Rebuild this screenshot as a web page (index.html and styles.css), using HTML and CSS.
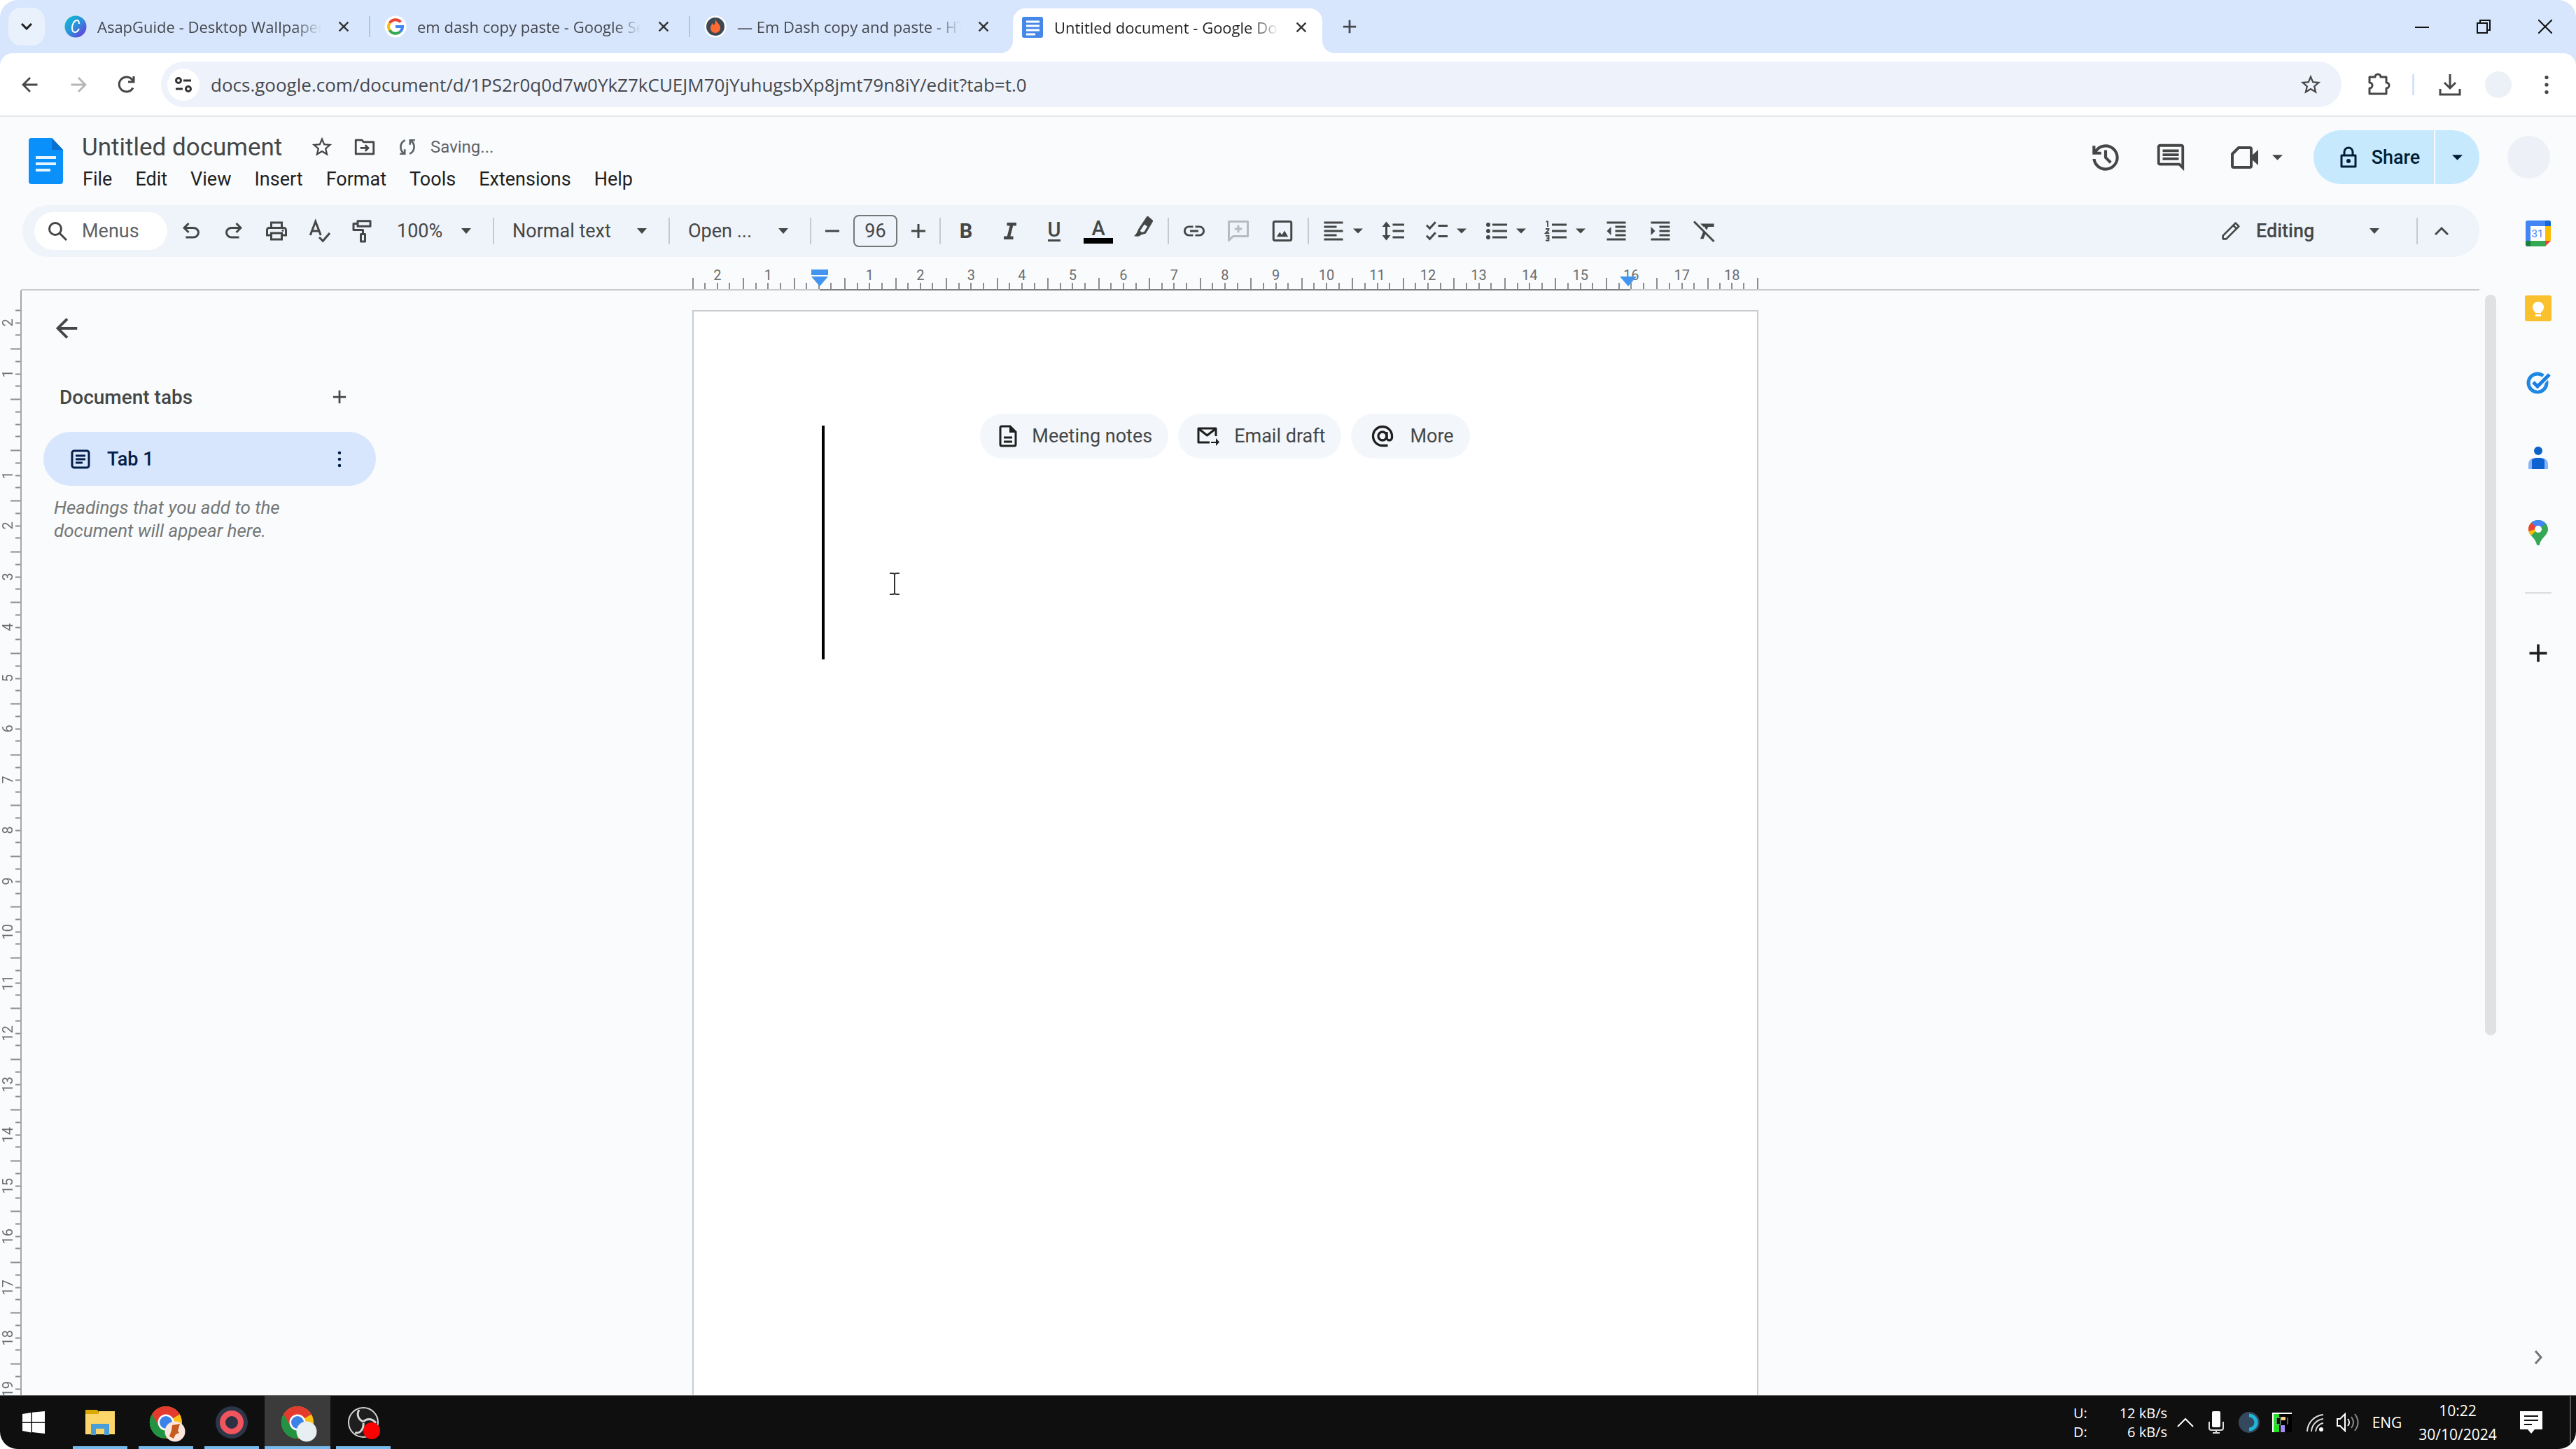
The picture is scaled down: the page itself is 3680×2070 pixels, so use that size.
FILE: index.html
```html
<!DOCTYPE html>
<html lang="en">
<head>
    <meta charset="UTF-8">
    <title>Untitled document - Google Docs</title>
    <meta name="viewport" content="width=device-width, initial-scale=1.0">
    <link rel="stylesheet" href="styles.css">
</head>
<body>
<svg class="sprite" width="0" height="0" aria-hidden="true">
    <symbol id="close" viewBox="0 0 20 20"><path d="M2 2l16 16M18 2L2 18" fill="none" stroke="currentColor" stroke-width="3"/></symbol>
    <symbol id="plus" viewBox="0 0 24 24"><path d="M12 2v20M2 12h20" fill="none" stroke="currentColor" stroke-width="3"/></symbol>
    <symbol id="arrow" viewBox="0 0 16 8"><path d="M0 0h16l-8 8z" fill="currentColor"/></symbol>
    <symbol id="dots" viewBox="0 0 8 32"><g fill="currentColor"><circle cx="4" cy="4" r="3"/><circle cx="4" cy="16" r="3"/><circle cx="4" cy="28" r="3"/></g></symbol>
    <symbol id="star" viewBox="0 0 24 24"><path fill="currentColor" d="M22 9.24l-7.19-.62L12 2 9.19 8.63 2 9.24l5.46 4.73L5.82 21 12 17.27 18.18 21l-1.63-7.03L22 9.24zM12 15.4l-3.76 2.27 1-4.28-3.32-2.88 4.38-.38L12 6.1l1.71 4.04 4.38.38-3.32 2.88 1 4.28L12 15.4z"/></symbol>
    <symbol id="back" viewBox="0 0 24 24"><path d="M21 12H4M12 3.5L3.500 12l8.500 8.500" fill="none" stroke="currentColor" stroke-width="2.400"/></symbol>
    <symbol id="chrome" viewBox="0 0 48 48">
        <circle cx="24" cy="24" r="23" fill="#fbc116"/>
        <path d="M24 24L4.080 12.500A23 23 0 0 1 43.900 12.500z" fill="#e33b2e"/>
        <path d="M4.080 12.500A23 23 0 0 0 24 47l10-17.300L24 24z" fill="#229342"/>
        <path d="M4.080 12.500L14 29.700 24 24V13z" fill="#e33b2e"/>
        <path d="M4.080 12.500L14 29.700l10 5.300 0 12A23 23 0 0 1 4.080 12.500z" fill="#229342"/>
        <circle cx="24" cy="24" r="11.500" fill="#fff"/>
        <circle cx="24" cy="24" r="9" fill="#3b82e8"/>
    </symbol>
</svg>

<div class="screen">
    <div class="browser">
        <div class="tabstrip">
            <button class="tab-search" aria-label="Search tabs"><svg width="16" height="10" viewBox="0 0 16 10"><path d="M1 1l7 7 7-7" fill="none" stroke="#1f1f1f" stroke-width="3"/></svg></button>
            <div class="tab">
                <svg class="favicon" viewBox="0 0 32 32"><defs><linearGradient id="canva" x1="0" y1="0" x2="1" y2="1"><stop offset="0" stop-color="#09c3cf"/><stop offset="0.500" stop-color="#2d8fdc"/><stop offset="1" stop-color="#7428e0"/></linearGradient></defs><circle cx="16" cy="16" r="15.500" fill="url(#canva)"/><path d="M21 12c0-3-1-5-3-5-4 0-7 6-7 11 0 4 2 6 4 6 3 0 5-3 6-5" fill="none" stroke="#fff" stroke-width="2"/></svg>
                <span class="tab-title">AsapGuide - Desktop Wallpaper</span>
                <button aria-label="Close tab"><svg width="16" height="16"><use href="#close"/></svg></button>
            </div>
            <div class="tab">
                <svg class="favicon" viewBox="0 0 32 32"><circle cx="16" cy="16" r="15.500" fill="#fff"/><g fill="none" stroke-width="4"><path d="M23.500 9.500A10 10 0 0 0 7.500 11" stroke="#ea4335"/><path d="M7.500 11a10 10 0 0 0 0 10" stroke="#fbbc05"/><path d="M7.500 21a10 10 0 0 0 15 2.500" stroke="#34a853"/><path d="M22.500 23.500A10 10 0 0 0 26 16H16" stroke="#4285f4"/></g></svg>
                <span class="tab-title">em dash copy paste - Google Search</span>
                <button aria-label="Close tab"><svg width="16" height="16"><use href="#close"/></svg></button>
            </div>
            <div class="tab">
                <svg class="favicon" viewBox="0 0 32 32"><circle cx="16" cy="16" r="15.500" fill="#fff"/><circle cx="16" cy="16" r="13" fill="#3d4852"/><path d="M16 5c1 5 7 7 7 13 0 4-3 7-7 7s-7-3-7-7c0-3 2-4 2-7l3 3c2-3 2-6 2-9z" fill="#ff6b35"/></svg>
                <span class="tab-title">— Em Dash copy and paste - HTML</span>
                <button aria-label="Close tab"><svg width="16" height="16"><use href="#close"/></svg></button>
            </div>
            <div class="tab active">
                <svg class="favicon" viewBox="0 0 32 32"><rect x="1" y="1" width="30" height="30" rx="3" fill="#4688e8"/><path d="M7 8h19M7 14h19M7 20h19M7 26h13" stroke="#fff" stroke-width="3"/></svg>
                <span class="tab-title">Untitled document - Google Docs</span>
                <button aria-label="Close tab"><svg width="16" height="16"><use href="#close"/></svg></button>
            </div>
            <button class="new-tab" aria-label="New tab"><svg width="22" height="22"><use href="#plus"/></svg></button>
            <div class="window-controls">
                <button aria-label="Minimise"><svg width="20" height="20" viewBox="0 0 20 20"><path d="M0 11h20" stroke="#111" stroke-width="2"/></svg></button>
                <button aria-label="Restore"><svg width="20" height="20" viewBox="0 0 20 20"><g fill="none" stroke="#111" stroke-width="2"><path d="M1 5h14v14H1z"/><path d="M5 5V1h14v14h-4"/></g></svg></button>
                <button aria-label="Close"><svg width="20" height="20" viewBox="0 0 20 20"><path d="M0 0l20 20M20 0L0 20" stroke="#111" stroke-width="2"/></svg></button>
            </div>
        </div>

        <div class="navbar">
            <button class="nav-button" aria-label="Back"><svg width="28" height="28"><use href="#back"/></svg></button>
            <button class="nav-button muted flip" aria-label="Forward"><svg width="28" height="28"><use href="#back"/></svg></button>
            <button class="nav-button" aria-label="Reload"><svg width="28" height="28" viewBox="0 0 28 28"><path d="M23 18.500A10.500 10.500 0 1 1 22 7l2 3M24 2v8h-8" fill="none" stroke="currentColor" stroke-width="3"/></svg></button>
            <div class="address">
                <button class="site-info" aria-label="View site information"><svg width="26" height="24" viewBox="0 0 26 24"><g fill="none" stroke="#333" stroke-width="3"><circle cx="6" cy="6" r="3.500"/><path d="M13 6h11M2 18h10"/><circle cx="20" cy="18" r="3.500"/></g></svg></button>
                <input class="url" type="text" aria-label="Address" value="docs.google.com/document/d/1PS2r0q0d7w0YkZ7kCUEJM70jYuhugsbXp8jmt79n8iY/edit?tab=t.0">
                <button class="nav-button" aria-label="Bookmark"><svg width="34" height="34"><use href="#star"/></svg></button>
            </div>
            <button class="extensions" aria-label="Extensions"><svg width="34" height="34" viewBox="0 0 34 34"><path d="M3 6h8a4 4 0 0 1 8 0h8v8a4 4 0 0 1 0 8v8H3v-8a4 4 0 0 0 0-8z" fill="none" stroke="currentColor" stroke-width="3" stroke-linejoin="round"/></svg></button>
            <span class="nav-divider"></span>
            <button class="nav-button" aria-label="Downloads"><svg width="32" height="32" viewBox="0 0 32 32"><path d="M16 1v19M8 13l8 8 8-8M2 22v8h28v-8" fill="none" stroke="currentColor" stroke-width="3"/></svg></button>
            <button class="nav-button" aria-label="Profile"><span class="avatar-small"></span></button>
            <button class="nav-button" aria-label="Menu"><svg width="8" height="28"><use href="#dots"/></svg></button>
        </div>
    </div>

    <div class="docs">
        <header class="docs-header">
            <a class="logo" href="#" aria-label="Docs home"><svg width="49" height="66" viewBox="0 0 49 66"><path d="M4 0h29l16 17v45a4 4 0 0 1-4 4H4a4 4 0 0 1-4-4V4a4 4 0 0 1 4-4z" fill="#0a90fb"/><path d="M33 0l16 17H33z" fill="#0a6fd0"/><path d="M10 28h29M10 37h29M10 46h21" stroke="#e5f4ff" stroke-width="4"/></svg></a>
            <div class="title-block">
                <div class="title-row">
                    <input class="doc-title" type="text" aria-label="Document title" value="Untitled document">
                    <button aria-label="Star"><svg width="34" height="34"><use href="#star"/></svg></button>
                    <button aria-label="Move"><svg width="34" height="34" viewBox="0 0 24 24"><g fill="none" stroke="currentColor" stroke-width="2"><path d="M3 5h6l2 2h10v12H3z" stroke-linejoin="round"/><path d="M7.500 13h8M12.500 10l3 3-3 3"/></g></svg></button>
                    <div class="status"><svg width="26" height="28" viewBox="0 0 24 24"><g fill="none" stroke="currentColor" stroke-width="2.500"><path d="M9 3A10 10 0 0 0 7 20M8.500 15v6H2M15 21A10 10 0 0 0 17 4M15.500 9V3H22"/></g></svg><span>Saving...</span></div>
                </div>
                <nav class="menus">
                    <button>File</button><button>Edit</button><button>View</button><button>Insert</button><button>Format</button><button>Tools</button><button>Extensions</button><button>Help</button>
                </nav>
            </div>
            <div class="header-actions">
                <button class="header-icon" aria-label="Version history"><svg width="50" height="50" viewBox="0 0 24 24"><path fill="currentColor" d="M12 21q-3.450 0-6.012-2.287T3.050 13H5.100q.350 2.600 2.313 4.300T12 19q2.925 0 4.963-2.037T19 12t-2.037-4.963T12 5q-1.725 0-3.225.800T6.250 8H9v2H3V4h2v2.350q1.275-1.600 3.113-2.475T12 3q1.875 0 3.513.713t2.850 1.924 1.925 2.850T21 12t-.712 3.513-1.925 2.850-2.850 1.925T12 21m2.800-4.800L11 12.400V7h2v4.600l3.200 3.200z"/></svg></button>
                <button class="header-icon" aria-label="Comments"><svg width="46" height="46" viewBox="0 0 24 24"><path fill="currentColor" d="M21.990 4c0-1.100-.890-2-1.990-2H4c-1.100 0-2 .900-2 2v12c0 1.100.900 2 2 2h14l4 4-.010-18zM20 4v13.170L18.830 16H4V4h16zM6 12h12v2H6zm0-3h12v2H6zm0-3h12v2H6z"/></svg></button>
                <button class="header-icon meet" aria-label="Meet"><svg width="40" height="32" viewBox="0 0 40 32"><path d="M11 2h16a2 2 0 0 1 2 2v24a2 2 0 0 1-2 2H4a2 2 0 0 1-2-2V11z" fill="none" stroke="currentColor" stroke-width="4" stroke-linejoin="round"/><path d="M29 14l10-9v22l-10-9z" fill="currentColor"/></svg><svg width="15" height="8"><use href="#arrow"/></svg></button>
                <div class="share">
                    <button class="share-main"><svg width="26" height="32" viewBox="0 0 26 32"><path d="M3 13h20v16H3zM7 13V8a6 6 0 0 1 12 0v5" fill="none" stroke="currentColor" stroke-width="3" stroke-linejoin="round"/><circle cx="13" cy="21" r="3" fill="currentColor"/></svg>Share</button>
                    <button class="share-more" aria-label="Quick sharing actions"><svg width="15" height="8"><use href="#arrow"/></svg></button>
                </div>
                <button class="avatar" aria-label="Account"></button>
            </div>
        </header>

        <div class="workspace">
            <main class="editor">
                <div class="toolbar">
                    <label class="menu-search"><svg width="28" height="28" viewBox="0 0 28 28"><g fill="none" stroke="#444746" stroke-width="3"><circle cx="11" cy="11" r="8.500"/><path d="M17 17l10 10"/></g></svg><input type="text" placeholder="Menus" aria-label="Search the menus"></label>
                    <button class="tool" aria-label="Undo"><svg viewBox="0 0 24 24"><path fill="currentColor" d="M7 19v-2h7.100q1.575 0 2.738-1T18 13.500 16.838 11 14.100 10H7.800l2.600 2.600L9 14 4 9l5-5 1.400 1.400L7.800 8h6.300q2.425 0 4.163 1.575T20 13.500t-1.737 3.925T14.100 19z"/></svg></button>
                    <button class="tool flip" aria-label="Redo"><svg viewBox="0 0 24 24"><path fill="currentColor" d="M7 19v-2h7.100q1.575 0 2.738-1T18 13.500 16.838 11 14.100 10H7.800l2.600 2.600L9 14 4 9l5-5 1.400 1.400L7.800 8h6.300q2.425 0 4.163 1.575T20 13.500t-1.737 3.925T14.100 19z"/></svg></button>
                    <button class="tool" aria-label="Print"><svg viewBox="0 0 24 24"><path fill="currentColor" d="M19 8h-1V3H6v5H5c-1.660 0-3 1.340-3 3v6h4v4h12v-4h4v-6c0-1.660-1.340-3-3-3zM8 5h8v3H8V5zm8 12v2H8v-4h8v2zm2-2v-2H6v2H4v-4c0-.550.450-1 1-1h14c.550 0 1 .450 1 1v4h-2z"/><circle cx="18" cy="11.500" r="1" fill="currentColor"/></svg></button>
                    <button class="tool" aria-label="Spelling and grammar check"><svg viewBox="0 0 24 24"><path d="M3.500 16L8.500 3l5 13M5.300 12h6.500M12 18l3.500 3.500L22 14" fill="none" stroke="currentColor" stroke-width="2"/></svg></button>
                    <button class="tool" aria-label="Paint format"><svg viewBox="0 0 24 24"><path d="M8 2.500h12v5H8zM8 5H4v6h9v4M11 15h4v7h-4z" fill="none" stroke="currentColor" stroke-width="2" stroke-linejoin="round"/></svg></button>
                    <span class="select zoom"><select aria-label="Zoom"><option>100%</option></select></span>
                    <span class="divider"></span>
                    <span class="select style"><select aria-label="Styles"><option>Normal text</option></select></span>
                    <span class="divider"></span>
                    <span class="select font"><select aria-label="Font"><option>Open ...</option></select></span>
                    <span class="divider"></span>
                    <button class="tool narrow" aria-label="Decrease font size"><svg class="small" viewBox="0 0 20 20"><path d="M0 10h20" stroke="currentColor" stroke-width="3"/></svg></button>
                    <input class="font-size" type="text" aria-label="Font size" value="96">
                    <button class="tool narrow" aria-label="Increase font size"><svg class="small" viewBox="0 0 20 20"><path d="M0 10h20M10 0v20" stroke="currentColor" stroke-width="3"/></svg></button>
                    <span class="divider"></span>
                    <div class="format-tools">
                        <button class="tool letter bold" aria-label="Bold">B</button>
                        <button class="tool" aria-label="Italic"><svg viewBox="0 0 24 24"><path d="M9 5.500h9M6 18.500h9M13.800 5l-3.600 14" fill="none" stroke="currentColor" stroke-width="3"/></svg></button>
                        <button class="tool letter" aria-label="Underline"><span class="underline">U</span></button>
                        <button class="tool letter" aria-label="Text colour"><span class="colour">A</span></button>
                        <button class="tool" aria-label="Highlight colour"><svg class="raised" viewBox="0 0 24 24"><path d="M17 3l4 3.500-6.500 11-3.500 1-4 1.500 2-5z" fill="none" stroke="currentColor" stroke-width="2.200" stroke-linejoin="round"/><path d="M17.500 3l3.500 3-3.800 6-5-3.500z" fill="currentColor"/><path d="M4 21l5-6 3 3-3 3z" fill="currentColor"/></svg></button>
                        <span class="divider"></span>
                        <button class="tool" aria-label="Insert link"><svg viewBox="0 0 24 24"><path fill="currentColor" d="M3.900 12c0-1.710 1.390-3.100 3.100-3.100h4V7H7c-2.760 0-5 2.240-5 5s2.240 5 5 5h4v-1.900H7c-1.710 0-3.100-1.390-3.100-3.100zM8 13h8v-2H8v2zm9-6h-4v1.900h4c1.710 0 3.100 1.390 3.100 3.100s-1.390 3.100-3.100 3.100h-4V17h4c2.760 0 5-2.240 5-5s-2.240-5-5-5z"/></svg></button>
                        <button class="tool disabled" aria-label="Add comment" disabled><svg viewBox="0 0 24 24"><path d="M3 21V3h18v14H7zM12 6.500v7M8.500 10h7" fill="none" stroke="currentColor" stroke-width="2" stroke-linejoin="round"/></svg></button>
                        <button class="tool" aria-label="Insert image"><svg viewBox="0 0 24 24"><rect x="3.500" y="3" width="17" height="18" rx="1.500" fill="none" stroke="currentColor" stroke-width="2"/><path d="M6.500 17.500l3-4.500 2 2.700 2.500-4 3.500 5.800z" fill="currentColor"/></svg></button>
                        <span class="divider"></span>
                        <button class="tool with-arrow" aria-label="Align"><svg viewBox="0 0 24 24"><path d="M3 4h18M3 8h12M3 12h18M3 16h12M3 20h18" stroke="currentColor" stroke-width="2"/></svg><svg class="caret-down"><use href="#arrow"/></svg></button>
                        <button class="tool" aria-label="Line and paragraph spacing"><svg viewBox="0 0 24 24"><path d="M11 6h11M11 12h11M11 18h11M5 6v12" stroke="currentColor" stroke-width="2"/><path d="M1 8l4-5 4 5zM1 16l4 5 4-5z" fill="currentColor"/></svg></button>
                        <button class="tool with-arrow" aria-label="Checklist"><svg viewBox="0 0 24 24"><path d="M13 7h9M13 17h9M2 6.500l3 3 5.500-6M2 16.500l3 3 5.500-6" fill="none" stroke="currentColor" stroke-width="2"/></svg><svg class="caret-down"><use href="#arrow"/></svg></button>
                        <button class="tool with-arrow" aria-label="Bulleted list"><svg viewBox="0 0 24 24"><path d="M8 6h14M8 12h14M8 18h14" stroke="currentColor" stroke-width="2"/><g fill="currentColor"><circle cx="4" cy="6" r="2"/><circle cx="4" cy="12" r="2"/><circle cx="4" cy="18" r="2"/></g></svg><svg class="caret-down"><use href="#arrow"/></svg></button>
                        <button class="tool with-arrow" aria-label="Numbered list"><svg viewBox="0 0 24 24"><path d="M8 6h14M8 12h14M8 18h14" stroke="currentColor" stroke-width="2"/><path d="M2.500 3h1.500v5M2 10h3v1l-3 3h3.500M2 16.500h3V21H2M3 18.700h2" fill="none" stroke="currentColor" stroke-width="1.200"/></svg><svg class="caret-down"><use href="#arrow"/></svg></button>
                        <button class="tool" aria-label="Decrease indent"><svg viewBox="0 0 24 24"><path d="M3 4h18M11 8h10M11 12h10M11 16h10M3 20h18" stroke="currentColor" stroke-width="2"/><path d="M7 8v8l-4-4z" fill="currentColor"/></svg></button>
                        <button class="tool" aria-label="Increase indent"><svg viewBox="0 0 24 24"><path d="M3 4h18M11 8h10M11 12h10M11 16h10M3 20h18" stroke="currentColor" stroke-width="2"/><path d="M3 8v8l4-4z" fill="currentColor"/></svg></button>
                        <button class="tool" aria-label="Clear formatting"><svg viewBox="0 0 24 24"><path d="M2 3l19 19" stroke="currentColor" stroke-width="2"/><path d="M8 5h13v3h-5.500l-1.300 3-2-2 .500-1H11zM11 12l2.200 2.200L11 19.500H8z" fill="currentColor"/></svg></button>
                    </div>
                    <span class="select mode"><svg width="32" height="32" viewBox="0 0 24 24"><path d="M3.500 20.500v-3.500L17 3.500l3.500 3.500L7 20.500zM14.500 6l3.500 3.500" fill="none" stroke="currentColor" stroke-width="2" stroke-linejoin="round"/></svg><select aria-label="Mode"><option>Editing</option></select></span>
                    <span class="divider"></span>
                    <button class="tool" aria-label="Hide the menus"><svg class="small" viewBox="0 0 20 20"><path d="M1 15l9-9 9 9" fill="none" stroke="currentColor" stroke-width="3"/></svg></button>
                </div>

                <div class="ruler-row">
                    <div class="ruler">
                        <span>2</span><span>1</span><span></span><span>1</span><span>2</span><span>3</span><span>4</span><span>5</span><span>6</span><span>7</span><span>8</span><span>9</span><span>10</span><span>11</span><span>12</span><span>13</span><span>14</span><span>15</span><span>16</span><span>17</span><span>18</span>
                        <i class="text-range"></i>
                        <svg class="indent-left" width="24" height="24" viewBox="0 0 24 24"><path d="M0 0h24v8H0zM0 10h24L12 24z" fill="#4294ee"/></svg>
                        <svg class="indent-right" width="24" height="14" viewBox="0 0 24 14"><path d="M0 0h24L12 14z" fill="#4294ee"/></svg>
                    </div>
                </div>

                <div class="canvas">
                    <div class="left-column">
                        <div class="ruler-vertical">
                            <div class="ruler-cells">
                                <span>2</span><span>1</span><span></span><span>1</span><span>2</span><span>3</span><span>4</span><span>5</span><span>6</span><span>7</span><span>8</span><span>9</span><span>10</span><span>11</span><span>12</span><span>13</span><span>14</span><span>15</span><span>16</span><span>17</span><span>18</span><span>19</span>
                            </div>
                        </div>
                        <aside class="outline">
                            <button class="outline-back" aria-label="Close tabs and outlines"><svg width="38" height="38"><use href="#back"/></svg></button>
                            <div class="outline-heading"><h2>Document tabs</h2><button aria-label="Add tab"><svg width="22" height="22"><use href="#plus"/></svg></button></div>
                            <div class="outline-tab">
                                <svg width="28" height="28" viewBox="0 0 28 28"><rect x="2" y="2" width="24" height="24" rx="3" fill="none" stroke="currentColor" stroke-width="3"/><path d="M7 9h14M7 14h14M7 19h10" stroke="currentColor" stroke-width="3"/></svg>
                                <a href="#">Tab 1</a>
                                <button aria-label="Tab options"><svg width="6" height="24"><use href="#dots"/></svg></button>
                            </div>
                            <p>Headings that you add to the document will appear here.</p>
                        </aside>
                    </div>
                    <div class="page">
                        <div class="chips">
                            <button><svg width="26" height="32" viewBox="0 0 26 32"><path d="M2 4a2 2 0 0 1 2-2h12l8 8v18a2 2 0 0 1-2 2H4a2 2 0 0 1-2-2z" fill="none" stroke="currentColor" stroke-width="3"/><path d="M15 2v9h9z" fill="currentColor"/><path d="M7 18h12M7 24h12" stroke="currentColor" stroke-width="3"/></svg>Meeting notes</button>
                            <button><svg width="32" height="28" viewBox="0 0 32 28"><path d="M27 14V3H2v20h16M3 4l11.500 9L26 4" fill="none" stroke="currentColor" stroke-width="3" stroke-linejoin="round"/><path d="M20 22h7v-5l5 5.500-5 5.500v-4h-7z" fill="currentColor"/></svg>Email draft</button>
                            <button><svg width="36" height="36" viewBox="0 0 24 24"><g fill="none" stroke="currentColor" stroke-width="2.200"><circle cx="12" cy="12" r="4"/><path d="M17 21H12A9 9 0 1 1 21 12v1.500a2.500 2.500 0 0 1-5 0V8"/></g></svg>More</button>
                        </div>
                        <span class="caret"></span>
                        <svg class="ibeam" width="14" height="32" viewBox="0 0 14 32"><path d="M0 1h5l2 1 2-1h5M7 2v28M0 31h5l2-1 2 1h5" fill="none" stroke="#333" stroke-width="2"/></svg>
                    </div>
                </div>
            </main>

            <div class="scroll-track"><div class="scroll-thumb"></div></div>

            <aside class="side-panel">
                <button aria-label="Calendar"><svg width="38" height="37" viewBox="0 0 38 37"><rect x="1" width="36" height="37" rx="3" fill="#4285f4"/><path d="M29 0h5a3 3 0 0 1 3 3v6h-8z" fill="#1967d2"/><path d="M29 8h8v21h-8z" fill="#fbbc04"/><path d="M8 29h21v8H8z" fill="#34a853"/><path d="M1 29h7v8H4a3 3 0 0 1-3-3z" fill="#188038"/><path d="M29 29h9v9h-9z" fill="#f9fbfd"/><path d="M29 29h8l-8 8z" fill="#ea4335"/><path d="M8 8h21v21H8z" fill="#fff"/><text x="18" y="24" text-anchor="middle" font-size="15" fill="#4285f4">31</text></svg></button>
                <button aria-label="Keep"><svg width="38" height="37" viewBox="0 0 38 37"><rect width="38" height="37" rx="3" fill="#fbc02d"/><circle cx="19" cy="17" r="8" fill="#fff"/><path d="M15 22h8v3h-8zM15 27h8v3h-8z" fill="#fff"/></svg></button>
                <button aria-label="Tasks"><svg width="36" height="34" viewBox="0 0 36 34"><circle cx="17" cy="17" r="13" fill="none" stroke="#1e88e5" stroke-width="5"/><path d="M11 16l6 6L33 5" fill="none" stroke="#f9fbfd" stroke-width="9"/><path d="M11 16l6 6L34 5" fill="none" stroke="#1a7fe5" stroke-width="5"/></svg></button>
                <button aria-label="Contacts"><svg width="28" height="32" viewBox="0 0 28 32"><circle cx="14" cy="6" r="6" fill="#0b62c4"/><path d="M0 32v-7c0-6 5-9 10-9h8c5 0 10 3 10 9v7z" fill="#8ab4f8"/><path d="M5 32V19c3-3 6-3 9-3s6 0 9 3v13z" fill="#0b62d0"/></svg></button>
                <button aria-label="Maps"><svg width="28" height="36" viewBox="0 0 28 36"><defs><clipPath id="pin"><path d="M14 0c8 0 14 6 14 13 0 9-10 12-12 22-1 2-3 2-4 0C10 25 0 22 0 13 0 6 6 0 14 0z"/></clipPath></defs><g clip-path="url(#pin)"><path d="M0 0h28v36H0z" fill="#34a853"/><path d="M0 26L22 4 0 0z" fill="#fbbc04"/><path d="M0 16L14 12 6 0H0z" fill="#ea4335"/><path d="M4 3l10 10L26 4 22 0H6z" fill="#4285f4"/></g><circle cx="14" cy="13" r="5" fill="#fff"/></svg></button>
                <hr>
                <button class="add-on" aria-label="Get add-ons"><svg width="30" height="30"><use href="#plus"/></svg></button>
                <button class="hide-panel" aria-label="Hide side panel"><svg width="12" height="20" viewBox="0 0 12 20"><path d="M2 1l8 9-8 9" fill="none" stroke="#757575" stroke-width="3"/></svg></button>
            </aside>
        </div>
    </div>

    <footer class="taskbar">
        <button class="task start" aria-label="Start"><svg width="32" height="32" viewBox="0 0 32 32"><path d="M0 4l12.500-2v13.500H0zM14 1.800L32 0v15.500H14zM0 17h12.500v13.500L0 28zM14 17h18v15l-18-2z" fill="#fff"/></svg></button>
        <button class="task open" aria-label="File Explorer"><svg width="42" height="38" viewBox="0 0 42 36"><path d="M0 0h17l2 3v5H0z" fill="#dba800"/><path d="M0 6h19V2h23v33H0z" fill="#fcd66b"/><path d="M8 36V20h26v16h-7v-9H15v9z" fill="#4a9fd8"/></svg></button>
        <button class="task open" aria-label="Chrome"><svg class="badged" width="48" height="48" viewBox="0 0 48 48"><use href="#chrome" x="0" y="0" width="48" height="48"/><circle cx="37" cy="37" r="14.500" fill="#fde4dc"/><path d="M33 28l11-2-3 10 2 3-5 2-3 6-6-3 3-9z" fill="#c75a1d"/></svg></button>
        <button class="task open" aria-label="Recorder"><svg width="46" height="46" viewBox="0 0 46 46"><circle cx="23" cy="23" r="23" fill="#2d3548"/><circle cx="23" cy="23" r="13" fill="#2b3142" stroke="#f0545c" stroke-width="8"/></svg></button>
        <button class="task open current" aria-label="Chrome, Untitled document"><svg class="badged" width="48" height="48" viewBox="0 0 48 48"><use href="#chrome" x="0" y="0" width="48" height="48"/><circle cx="37" cy="37" r="14.500" fill="#e8eff2"/></svg></button>
        <button class="task open" aria-label="OBS Studio"><svg class="badged" width="44" height="44" viewBox="0 0 44 44"><circle cx="22" cy="22" r="21" fill="#1e1e1e" stroke="#d5d5d5" stroke-width="2"/><path d="M16 4c-4 7-1 14 6 17M40 23c-5-7-13-7-18-2M10 37c8 1 13-6 12-14" fill="none" stroke="#d5d5d5" stroke-width="3"/><circle cx="34" cy="34" r="12" fill="#f00"/></svg></button>

        <div class="tray">
            <dl class="net"><dt>U:</dt><dd>12 kB/s</dd><dt>D:</dt><dd>6 kB/s</dd></dl>
            <button class="more-icons" aria-label="Show hidden icons"><svg width="24" height="14" viewBox="0 0 24 14"><path d="M1 13L12 2l11 11" fill="none" stroke="#fff" stroke-width="2"/></svg></button>
            <button aria-label="Microphone"><svg width="22" height="32" viewBox="0 0 22 32"><rect x="5" width="12" height="23" rx="2" fill="#fff"/><path d="M1 15v9a3 3 0 0 0 3 3h14a3 3 0 0 0 3-3v-9M11 27v4M6 31h10" fill="none" stroke="#ddd" stroke-width="2"/></svg></button>
            <button aria-label="Updater"><svg width="30" height="30" viewBox="0 0 30 30"><circle cx="15" cy="15" r="15" fill="#34495e"/><path d="M15 5a10 10 0 0 1 0 20" fill="none" stroke="#1fb6d9" stroke-width="5"/></svg></button>
            <button aria-label="Monitor"><svg width="28" height="28" viewBox="0 0 28 28"><path d="M0 0h28v28H0z" fill="#000"/><path d="M0 2h10v26H0z" fill="#1fe01f"/><path d="M12 18h6v10h-6z" fill="#a58bf0"/><path d="M0 1h28M1 0v28" stroke="#fff" stroke-width="2"/><path d="M6 7v10h6V7zM22 7v10" fill="#111" stroke="#9ad6a0" stroke-width="1"/><path d="M13 6h6v5h-6z" fill="#ffd08a"/></svg></button>
            <button aria-label="Network"><svg width="24" height="26" viewBox="0 0 24 26"><g fill="none" stroke="#e0e0e0" stroke-width="2"><path d="M1 26A25 25 0 0 1 24 2M7 26A19 19 0 0 1 24 8M13 26A13 13 0 0 1 24 14"/></g><circle cx="21" cy="23" r="3" fill="#fff"/></svg></button>
            <button aria-label="Volume"><svg width="32" height="28" viewBox="0 0 32 28"><path d="M1 9h4l7-7v24l-7-7H1z" fill="none" stroke="#fff" stroke-width="2"/><path d="M16 9q4 5 0 10" fill="none" stroke="#fff" stroke-width="2"/><path d="M21 6q6 8 0 16M26 2q9 12 0 24" fill="none" stroke="#888" stroke-width="2"/></svg></button>
            <button class="language">ENG</button>
            <button class="clock"><span>10:22</span><span>30/10/2024</span></button>
            <button class="notifications" aria-label="Notifications"><svg width="32" height="32" viewBox="0 0 32 32"><path d="M0 0h32v26H21l-5 6-5-6H0z" fill="#fff"/><path d="M6 7h20M6 13h20M6 19h11" stroke="#111" stroke-width="2"/></svg></button>
            <button class="show-desktop" aria-label="Show desktop"></button>
        </div>
    </footer>
</div>
</body>
</html>
```
FILE: styles.css
```css
* {
    box-sizing: border-box;
}
body {
    margin: 0;
    background: #fff;
    color: #444746;
    font-family: Roboto, Arial, sans-serif;
    font-size: 27px;
}
button,
input,
select {
    margin: 0;
    padding: 0;
    border: none;
    background: none;
    color: inherit;
    font: inherit;
    outline: none;
}
button {
    display: flex;
    align-items: center;
    justify-content: center;
    cursor: pointer;
}
button svg {
    display: block;
    flex-shrink: 0;
}
.sprite {
    position: absolute;
}
.flip svg {
    transform: scaleX(-1);
}
.screen {
    display: flex;
    flex-direction: column;
    height: 100vh;
    border-radius: 25px;
    overflow: hidden;
}

/* browser frame */
.browser {
    background: #d7e6fc;
    font-family: "Open Sans", "Segoe UI", sans-serif;
}
.tabstrip {
    display: flex;
    align-items: center;
    height: 76px;
    padding-left: 12px;
}
.tab-search {
    width: 52px;
    height: 54px;
    margin-right: 8px;
    border-radius: 18px;
    background: #e9f1fd;
}
.tab {
    display: flex;
    align-items: center;
    width: 457px;
    height: 30px;
    padding-left: 20px;
    border-right: 2px solid #a8c7f5;
}
.favicon {
    width: 32px;
    height: 32px;
    margin-right: 15px;
    flex-shrink: 0;
}
.tab-title {
    flex: 1;
    overflow: hidden;
    white-space: nowrap;
    font-size: 22px;
    line-height: 32px;
    color: #44474d;
    -webkit-mask-image: linear-gradient(90deg, #000 88%, transparent);
    mask-image: linear-gradient(90deg, #000 88%, transparent);
}
.tab button {
    width: 32px;
    height: 32px;
    margin: 0 20px 0 16px;
    color: #333;
}
.tab:nth-child(4) {
    border-right-color: transparent;
}
.tab.active {
    position: relative;
    align-self: flex-end;
    width: 442px;
    height: 64px;
    margin-left: 4px;
    padding: 0 0 10px 12px;
    border: none;
    border-radius: 18px 18px 0 0;
    background: #fff;
}
.tab.active .tab-title {
    color: #1f1f1f;
}
.tab.active button {
    margin-right: 14px;
}
.tab.active::before,
.tab.active::after {
    content: "";
    position: absolute;
    bottom: 0;
    width: 18px;
    height: 18px;
}
.tab.active::before {
    right: 100%;
    background: radial-gradient(circle at 0 0, transparent 18px, #fff 18px);
}
.tab.active::after {
    left: 100%;
    background: radial-gradient(circle at 100% 0, transparent 18px, #fff 18px);
}
.new-tab {
    width: 54px;
    height: 54px;
    margin-left: 12px;
    color: #44474d;
}
.window-controls {
    display: flex;
    margin-left: auto;
}
.window-controls button {
    width: 88px;
    height: 76px;
}
.navbar {
    display: flex;
    align-items: center;
    height: 91px;
    padding: 0 8px;
    border-bottom: 2px solid #e4e6e8;
    border-radius: 18px 18px 0 0;
    background: #fff;
}
.nav-button {
    width: 69px;
    height: 64px;
    color: #474747;
}
.nav-button.muted {
    color: #b5b5b5;
}
.address {
    display: flex;
    align-items: center;
    flex: 1;
    height: 65px;
    margin-left: 15px;
    padding: 0 10px 0 9px;
    border-radius: 33px;
    background: #eef2fa;
}
.site-info {
    width: 46px;
    height: 46px;
    margin-right: 16px;
    border-radius: 50%;
    background: #fff;
}
.url {
    flex: 1;
    height: 60px;
    font-size: 26px;
    color: #45484d;
}
.extensions {
    width: 101px;
    height: 64px;
    padding-left: 6px;
    color: #474747;
}
.nav-divider {
    width: 3px;
    height: 30px;
    margin-right: 16px;
    background: #d3e3fd;
}
.avatar-small {
    width: 38px;
    height: 38px;
    border-radius: 50%;
    background: #ebf1f6;
}

/* docs header */
.docs {
    display: flex;
    flex-direction: column;
    flex: 1;
    min-height: 0;
    background: #f9fbfd;
}
.docs-header {
    display: flex;
    align-items: flex-start;
    height: 126px;
    padding: 19px 37px 0 41px;
}
.logo {
    margin-top: 11px;
}
.title-block {
    margin-left: 27px;
}
.title-row {
    display: flex;
    align-items: center;
    height: 48px;
}
.doc-title {
    width: 318px;
    height: 46px;
    font-size: 35px;
}
.title-row button {
    width: 50px;
    height: 44px;
    margin-right: 11px;
}
.status {
    display: flex;
    align-items: center;
    gap: 20px;
    margin-left: 12px;
    font-size: 24px;
    color: #5f6368;
}
.menus {
    display: flex;
    gap: 33px;
    height: 44px;
    padding-left: 1px;
}
.menus button {
    color: #1f1f1f;
}
.header-actions {
    display: flex;
    align-items: center;
    height: 77px;
    margin-left: auto;
}
.header-icon {
    width: 93px;
    height: 77px;
}
.meet {
    width: 126px;
    gap: 19px;
    margin-left: 14px;
}
.share {
    display: flex;
    width: 237px;
    height: 77px;
    margin: 0 40px 0 18px;
    border-radius: 39px;
    background: #c7e9fe;
    color: #001d35;
    font-weight: 500;
    overflow: hidden;
}
.share-main {
    flex: 1;
    gap: 20px;
    padding-left: 17px;
    border-right: 2px solid #f9fbfd;
}
.share-more {
    width: 63px;
}
.avatar {
    width: 61px;
    height: 61px;
    border-radius: 50%;
    background: #edf1f7;
}

/* editor */
.workspace {
    display: grid;
    grid-template-columns: minmax(0, 1fr) 30px 108px;
    flex: 1;
    min-height: 0;
}
.editor {
    display: flex;
    flex-direction: column;
    min-height: 0;
}
.toolbar {
    display: flex;
    align-items: center;
    gap: 7px;
    height: 74px;
    margin-left: 32px;
    padding: 0 27px 0 17px;
    border-radius: 37px;
    background: #eff3fa;
}
.menu-search {
    display: flex;
    align-items: center;
    gap: 21px;
    width: 190px;
    height: 54px;
    padding-left: 19px;
    border-radius: 27px;
    background: #fff;
}
.menu-search input {
    width: 110px;
}
.menu-search input::placeholder {
    color: #5f6368;
    opacity: 1;
}
.format-tools {
    display: flex;
    align-items: center;
    gap: 9px;
    margin-left: 2px;
}
.tool {
    width: 54px;
    height: 54px;
    flex-shrink: 0;
}
.tool svg {
    width: 36px;
    height: 36px;
}
.tool svg.small {
    width: 20px;
    height: 20px;
}
.tool svg.raised {
    margin-bottom: 12px;
}
.tool svg.caret-down {
    width: 14px;
    height: 8px;
    margin-left: 10px;
}
.tool.narrow {
    width: 46px;
}
.tool.with-arrow {
    width: 76px;
}
.tool.disabled {
    color: #b7bbc1;
}
.letter {
    font-size: 29px;
    font-weight: 500;
}
.letter.bold {
    font-weight: 700;
}
.underline,
.colour {
    line-height: 27px;
    border-bottom: 3px solid;
}
.colour {
    width: 42px;
    border-bottom: 8px solid #000;
}
.divider {
    width: 2px;
    height: 38px;
    background: #c7c9cc;
}
.select {
    display: grid;
    align-items: center;
}
.select select {
    grid-area: 1 / 1;
    height: 54px;
    padding-left: 19px;
    appearance: none;
}
.select::after {
    content: "";
    grid-area: 1 / 1;
    justify-self: end;
    margin-right: 24px;
    border: 7px solid transparent;
    border-top: 8px solid #444746;
    border-bottom: none;
    pointer-events: none;
}
.zoom {
    width: 146px;
}
.zoom select {
    padding-left: 16px;
}
.style {
    width: 235px;
}
.font {
    width: 186px;
}
.font-size {
    width: 63px;
    height: 46px;
    border: 2px solid #747775;
    border-radius: 8px;
    text-align: center;
}
.mode {
    width: 252px;
    margin-left: auto;
    margin-right: 22px;
}
.mode svg,
.mode select {
    grid-area: 1 / 1;
}
.mode select {
    padding-left: 52px;
    font-weight: 500;
}
.ruler-row {
    height: 48px;
    margin-left: 30px;
    padding-right: 72px;
    border-bottom: 2px solid #c7c9cb;
}
.ruler {
    position: relative;
    display: grid;
    grid-template-columns: repeat(21, 1fr);
    width: 1523px;
    height: 46px;
    margin: 0 auto;
    padding-top: 15px;
    font-size: 20px;
    line-height: 22px;
    text-align: center;
}
.ruler span {
    color: #6b6e70;
    background:
        linear-gradient(#8b8e90, #8b8e90) 0 100% / 2px 16px,
        linear-gradient(#8b8e90, #8b8e90) 25% 100% / 2px 9px,
        linear-gradient(#8b8e90, #8b8e90) 50% 100% / 2px 9px,
        linear-gradient(#8b8e90, #8b8e90) 75% 100% / 2px 9px;
    background-repeat: no-repeat;
}
.ruler span:last-of-type {
    border-right: 2px solid;
    border-image: linear-gradient(transparent 50%, #8b8e90 50%) 1;
}
.text-range {
    position: absolute;
    left: 12%;
    right: 12%;
    bottom: -2px;
    height: 2px;
    background: #808386;
}
.indent-left,
.indent-right {
    position: absolute;
    bottom: 4px;
    margin-left: -12px;
}
.indent-left {
    left: 12%;
}
.indent-right {
    left: 88%;
    margin-left: -15px;
}
.canvas {
    display: grid;
    grid-template-columns: 1fr 1523px 1fr;
    flex: 1;
    min-height: 0;
    padding-right: 42px;
    overflow: hidden;
}
.left-column {
    display: flex;
    min-height: 0;
}
.ruler-vertical {
    width: 31px;
    padding-top: 10px;
    overflow: hidden;
    border-right: 2px solid #a5a8aa;
}
.ruler-cells {
    display: grid;
    grid-template-rows: repeat(22, 1fr);
    height: 1595px;
    font-size: 20px;
    line-height: 22px;
}
.ruler-cells span {
    display: flex;
    align-items: center;
    justify-content: center;
    writing-mode: vertical-rl;
    transform: rotate(180deg);
    padding-left: 9px;
    color: #6b6e70;
    background:
        linear-gradient(#8b8e90, #8b8e90) 0 100% / 16px 2px,
        linear-gradient(#8b8e90, #8b8e90) 0 25% / 9px 2px,
        linear-gradient(#8b8e90, #8b8e90) 0 50% / 9px 2px,
        linear-gradient(#8b8e90, #8b8e90) 0 75% / 9px 2px;
    background-repeat: no-repeat;
}
.ruler-cells span:first-child {
    background-size: 0 0, 9px 2px, 9px 2px, 9px 2px;
}

/* tabs and outline */
.outline {
    width: 475px;
    margin-left: 31px;
    padding-top: 29px;
}
.outline-back {
    width: 68px;
    height: 50px;
}
.outline-heading {
    display: flex;
    align-items: center;
    justify-content: space-between;
    height: 50px;
    margin-top: 48px;
    padding: 0 32px 0 23px;
}
.outline-heading h2 {
    margin: 0;
    font-size: 28px;
    font-weight: 500;
}
.outline-heading button,
.outline-tab button {
    width: 40px;
    height: 40px;
}
.outline-tab {
    display: flex;
    align-items: center;
    height: 77px;
    margin-top: 25px;
    padding: 0 32px 0 39px;
    border-radius: 39px;
    background: #d7e6fc;
    color: #041e49;
}
.outline-tab a {
    flex: 1;
    margin-left: 24px;
    color: inherit;
    font-weight: 500;
    text-decoration: none;
}
.outline p {
    width: 360px;
    margin: 15px 0 0 15px;
    font-size: 26px;
    line-height: 33px;
    font-style: italic;
    color: #747775;
}

/* page */
.page {
    position: relative;
    margin-top: 28px;
    padding: 163px 0 0 183px;
    border: 2px solid #c9cccf;
    border-bottom: none;
    background: #fff;
}
.chips {
    position: absolute;
    top: 146px;
    left: 0;
    right: 0;
    display: flex;
    justify-content: center;
    gap: 14px;
}
.chips button {
    gap: 21px;
    height: 64px;
    padding: 0 23px 0 27px;
    border-radius: 32px;
    background: #f3f6fb;
}
.chips svg {
    color: #1f1f1f;
}
.caret {
    display: block;
    width: 4px;
    height: 334px;
    background: #000;
}
.ibeam {
    position: absolute;
    top: 373px;
    left: 280px;
}
.scroll-track {
    padding: 54px 6px 0 8px;
    margin-top: 74px;
}
.scroll-thumb {
    height: 1058px;
    border-radius: 8px;
    background: #dfe1e3;
}

/* side panel */
.side-panel {
    display: flex;
    flex-direction: column;
    align-items: center;
    gap: 27px;
    padding-bottom: 14px;
}
.side-panel button {
    width: 80px;
    height: 80px;
    flex-shrink: 0;
}
.side-panel hr {
    width: 38px;
    height: 2px;
    margin: 18px 0;
    border: none;
    background: #dadce0;
}
.add-on {
    color: #1f1f1f;
}
.side-panel .hide-panel {
    margin-top: auto;
}

/* taskbar */
.taskbar {
    display: flex;
    height: 77px;
    border-top: 1px solid #6b6b6b;
    background: #0f0f0f;
    color: #fff;
    font-family: "Open Sans", "Segoe UI", sans-serif;
    font-size: 21px;
}
.task {
    position: relative;
    width: 94px;
}
.start {
    width: 96px;
}
.badged {
    overflow: visible;
}
.task.open::after {
    content: "";
    position: absolute;
    left: 8px;
    right: 8px;
    bottom: 0;
    height: 4px;
    background: #76b9ed;
}
.task.current {
    background: #3b3b3b;
}
.task.current::after {
    left: 0;
    right: 0;
}
.tray {
    display: flex;
    align-items: center;
    margin-left: auto;
}
.tray button {
    width: 47px;
    height: 76px;
}
.tray .more-icons {
    width: 41px;
}
.net {
    display: grid;
    grid-template-columns: 50px 84px;
    margin: 0 5px 0 0;
    font-size: 20px;
    line-height: 27px;
}
.net dd {
    margin: 0;
    text-align: right;
}
.tray .language {
    width: 66px;
}
.tray .clock {
    flex-direction: column;
    width: 136px;
    line-height: 34px;
}
.tray .notifications {
    width: 74px;
}
.tray .show-desktop {
    width: 9px;
    margin-left: 18px;
    border-left: 2px solid #555;
}
```
